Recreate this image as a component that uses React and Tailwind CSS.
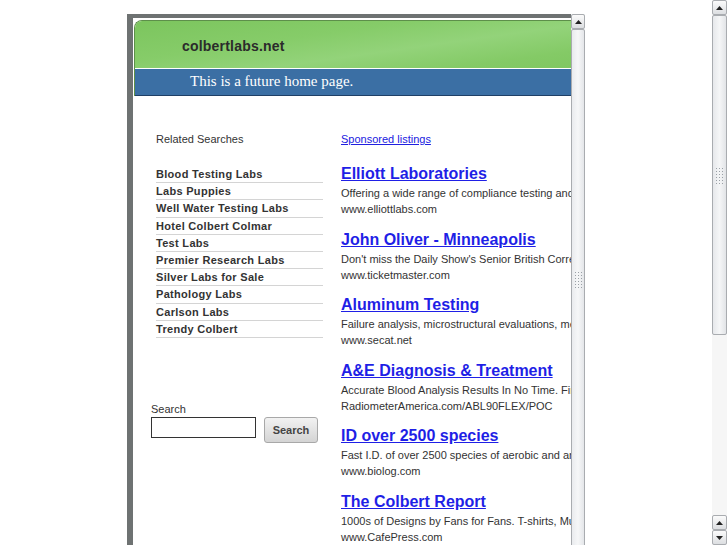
import React from "react";

const related = [
  "Blood Testing Labs",
  "Labs Puppies",
  "Well Water Testing Labs",
  "Hotel Colbert Colmar",
  "Test Labs",
  "Premier Research Labs",
  "Silver Labs for Sale",
  "Pathology Labs",
  "Carlson Labs",
  "Trendy Colbert",
];

const ads = [
  {
    title: "Elliott Laboratories",
    desc: "Offering a wide range of compliance testing and certification services",
    url: "www.elliottlabs.com",
  },
  {
    title: "John Oliver - Minneapolis",
    desc: "Don't miss the Daily Show's Senior British Correspondent live on stage",
    url: "www.ticketmaster.com",
  },
  {
    title: "Aluminum Testing",
    desc: "Failure analysis, microstructural evaluations, mechanical testing",
    url: "www.secat.net",
  },
  {
    title: "A&E Diagnosis & Treatment",
    desc: "Accurate Blood Analysis Results In No Time. Find out more today",
    url: "RadiometerAmerica.com/ABL90FLEX/POC",
  },
  {
    title: "ID over 2500 species",
    desc: "Fast I.D. of over 2500 species of aerobic and anaerobic bacteria",
    url: "www.biolog.com",
  },
  {
    title: "The Colbert Report",
    desc: "1000s of Designs by Fans for Fans. T-shirts, Mugs, Stickers & More",
    url: "www.CafePress.com",
  },
];

function Arrow({ down }) {
  return (
    <svg width="7" height="4" viewBox="0 0 7 4">
      <path d={down ? "M0 0 L7 0 L3.5 4 Z" : "M0 4 L7 4 L3.5 0 Z"} fill="#222" />
    </svg>
  );
}

// little dotted grip in the middle of a scroll thumb
function Grip() {
  return (
    <div className="self-start grid grid-cols-3 gap-[2px]">
      {Array.from({ length: 18 }).map((_, i) => (
        <div key={i} className="w-[1px] h-[1px] bg-[#9aa0a6]" />
      ))}
    </div>
  );
}

function ScrollButton({ down }) {
  return (
    <div className="h-[15px] shrink-0 flex items-center justify-center border border-[#a9acb0] rounded-[2px] bg-[linear-gradient(#fbfbfb,#dcdee1)]">
      <Arrow down={down} />
    </div>
  );
}

export default function App() {
  return (
    <div className="w-[727px] h-[545px] overflow-hidden flex bg-white font-['Liberation_Sans',Arial,sans-serif]">
      {/* page area */}
      <div className="flex-1 pt-[14px] pl-[127px]">
        <div className="flex w-[458px] h-[560px]">
          {/* framed page */}
          <div className="w-[444px] overflow-hidden bg-white border-l-[6px] border-t-[4px] border-[#6e7272]">
            <div className="pt-[2px] pl-[1px]">
              <div className="rounded-tl-[8px] border-l border-t border-[#5d8f4a] overflow-hidden w-[600px]">
                <div className="h-[47px] flex items-center pl-[47px] pt-[4px] bg-[linear-gradient(172deg,#7cc55e_0%,#86cc69_30%,#93d37a_50%,#84ca66_70%,#7ac35c_100%)]">
                  <span className="text-[14px] font-bold text-[#2b2b2b] tracking-[0.2px]">
                    colbertlabs.net
                  </span>
                </div>
                <div className="h-[1px] bg-white" />
                <div className="h-[27px] flex items-center pl-[55px] pb-[2px] bg-[#3b6fa4] border-b border-[#1f3f66]">
                  <span className="text-white text-[15px] font-['Liberation_Serif',serif]">
                    This is a future home page.
                  </span>
                </div>
              </div>
            </div>

            <div className="flex pt-[36px] w-[700px]">
              {/* left column */}
              <div className="w-[208px] pl-[18px] shrink-0">
                <div className="pl-[5px] text-[11px] leading-[14px] text-[#333]">
                  Related Searches
                </div>
                <div className="pl-[5px] mt-[20px] w-[172px]">
                  {related.map((r) => (
                    <div
                      key={r}
                      className="text-[11px] font-bold leading-[16.2px] text-[#333] border-b border-[#d4d4d4] tracking-[0.3px]"
                    >
                      {r}
                    </div>
                  ))}
                </div>
                <div className="mt-[64px] text-[11px] leading-[14px] text-[#333]">Search</div>
                <div className="flex items-start gap-[8px] mt-[1px]">
                  <input
                    type="text"
                    className="w-[105px] h-[21px] border border-[#333] bg-white outline-none"
                  />
                  <button className="w-[54px] h-[26px] rounded-[3px] border border-[#a8a8a8] bg-[linear-gradient(#f2f2f2,#d4d4d4)] text-[11px] font-bold text-[#444]">
                    Search
                  </button>
                </div>
              </div>

              {/* right column */}
              <div className="shrink-0 w-[480px]">
                <a href="#" className="block text-[11px] leading-[14px] text-[#2020e0] underline">
                  Sponsored listings
                </a>
                <div className="mt-[17px]">
                  {ads.map((a) => (
                    <div key={a.title} className="mb-[11.5px]">
                      <a
                        href="#"
                        className="block text-[16px] leading-[22px] font-bold text-[#1f1fe6] underline"
                      >
                        {a.title}
                      </a>
                      <div className="text-[11px] leading-[16px] text-[#333] whitespace-nowrap">
                        {a.desc}
                      </div>
                      <div className="text-[11px] leading-[16px] text-[#333]">{a.url}</div>
                    </div>
                  ))}
                </div>
              </div>
            </div>
          </div>

          {/* inner scrollbar */}
          <div className="w-[14px] flex flex-col bg-[#eceef0]">
            <ScrollButton />
            <div className="flex-1 border border-[#a9acb0] rounded-[2px] bg-[linear-gradient(90deg,#e9ebee,#f6f7f8,#e4e6e9)] flex justify-center pt-[242px]">
              <Grip />
            </div>
          </div>
        </div>
      </div>

      {/* outer scrollbar */}
      <div className="w-[15px] flex flex-col bg-[#f3f3f3]">
        <ScrollButton />
        <div className="h-[320px] shrink-0 border border-[#a9acb0] rounded-[2px] bg-[linear-gradient(90deg,#e6e8eb,#f5f6f7,#e2e4e7)] flex justify-center pt-[152px]">
          <Grip />
        </div>
        <div className="flex-1 bg-[#f6f6f6]" />
        <ScrollButton />
        <ScrollButton down />
      </div>
    </div>
  );
}
